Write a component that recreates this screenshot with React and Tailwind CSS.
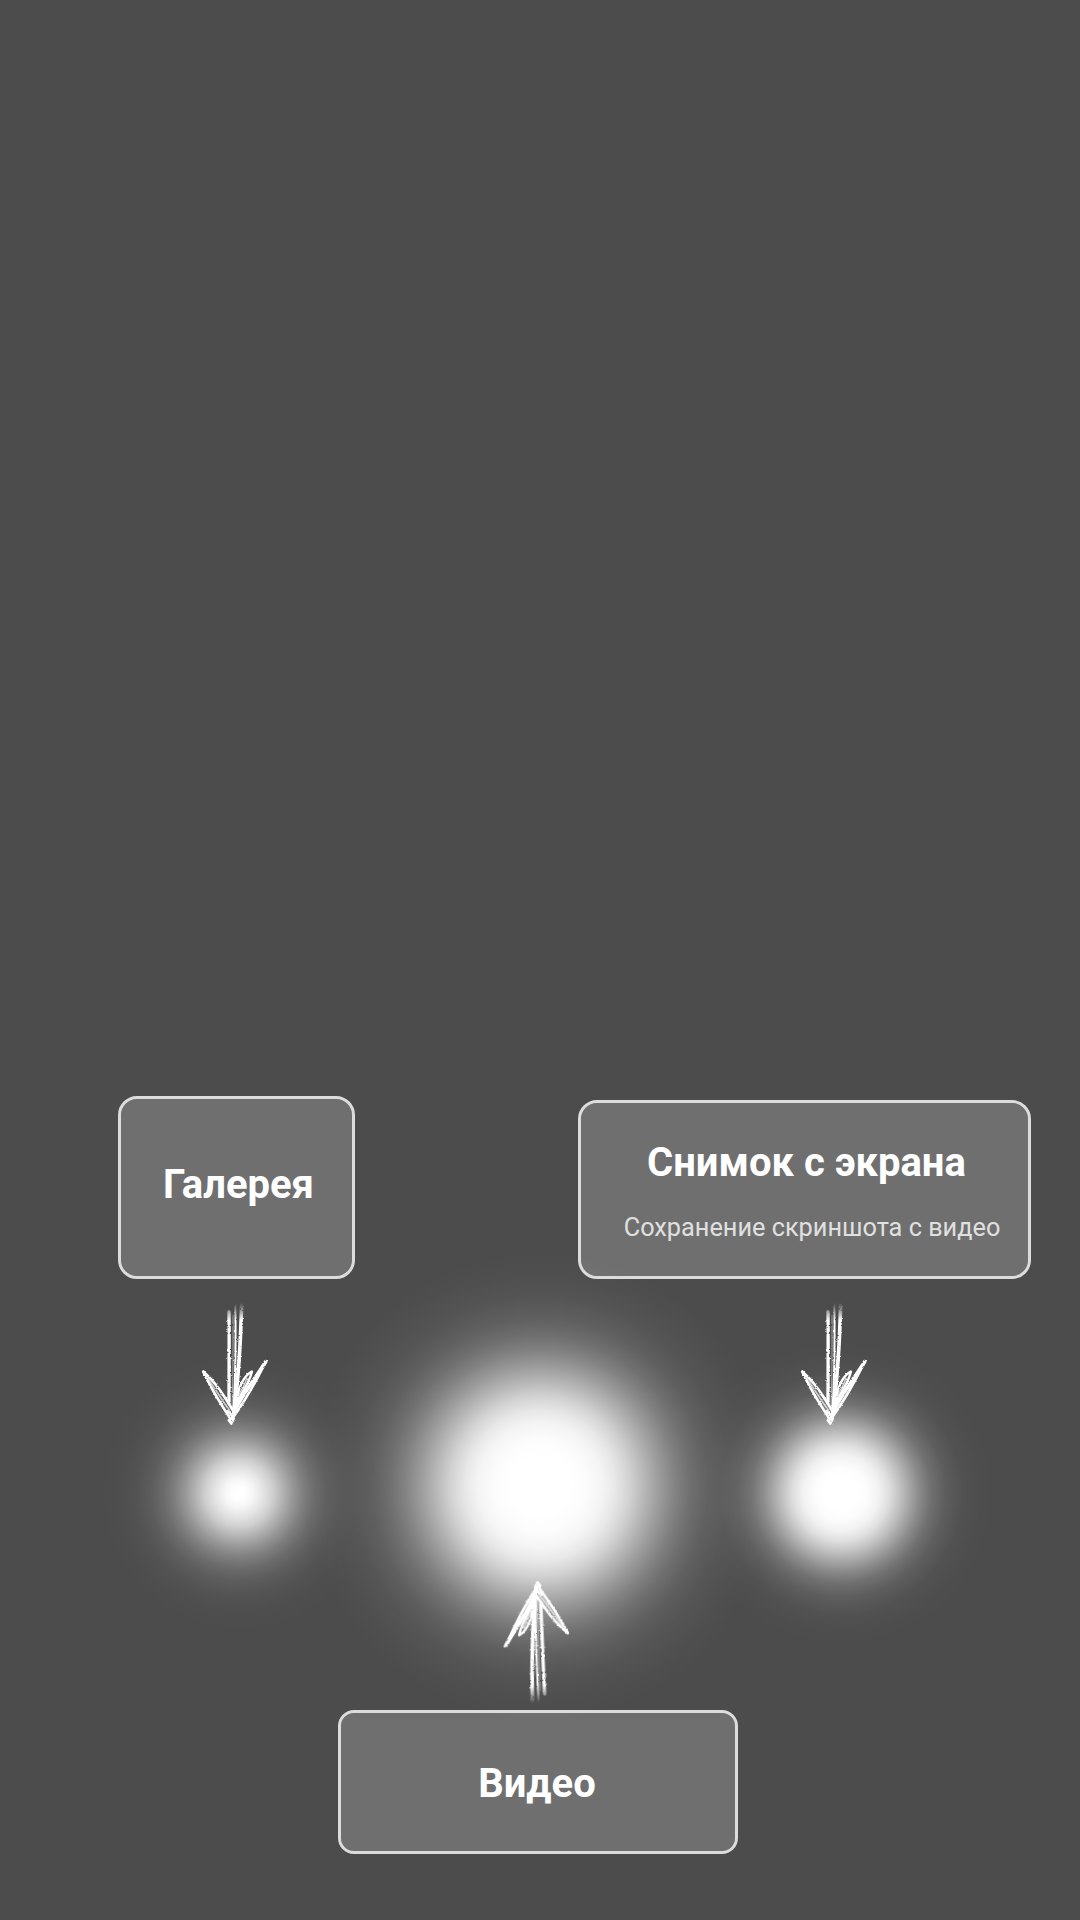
import React from "react";

const GLOWS = {
  small: [[0, 1], [6, 0.995], [14, 0.95], [24, 0.85], [34, 0.73], [44, 0.57], [54, 0.42], [64, 0.29], [75, 0.18], [88, 0.095], [103, 0.04], [120, 0.012], [140, 0]],
  medium: [[0, 1], [16, 1], [26, 0.985], [38, 0.925], [48, 0.82], [58, 0.67], [68, 0.51], [78, 0.355], [90, 0.205], [104, 0.1], [122, 0.03], [140, 0.008], [155, 0]],
  large: [[0, 1], [28, 1], [45, 0.985], [62, 0.94], [75, 0.87], [90, 0.745], [105, 0.59], [120, 0.44], [135, 0.305], [150, 0.2], [168, 0.11], [190, 0.048], [212, 0.018], [235, 0]],
};

function Glow({ size, className }) {
  const stops = GLOWS[size];
  const r = stops[stops.length - 1][0];
  return (
    <svg width={r * 2} height={r * 2} className={`absolute -z-10 max-w-none -translate-x-1/2 -translate-y-1/2 ${className}`} aria-hidden="true">
      <radialGradient id={`glow-${size}`}>
        {stops.map(([d, a]) => (
          <stop key={d} offset={d / r} stopColor="#fff" stopOpacity={a} />
        ))}
      </radialGradient>
      <circle cx={r} cy={r} r={r} fill={`url(#glow-${size})`} />
    </svg>
  );
}

// Chalk arrow: rough strokes, fading out at the tail
function Arrow({ id, up = false }) {
  return (
    <svg width="90" height="140" viewBox="0 0 270 420" className="block overflow-visible" aria-hidden="true">
      <defs>
        <linearGradient id={`fade-${id}`} gradientUnits="userSpaceOnUse" x1="0" y1="24" x2="0" y2="76">
          <stop offset="0" stopColor="#fff" stopOpacity="0" />
          <stop offset="1" stopColor="#fff" />
        </linearGradient>
        <mask id={`tail-${id}`} maskUnits="userSpaceOnUse" x="0" y="0" width="270" height="420">
          <rect width="270" height="420" fill={`url(#fade-${id})`} />
        </mask>
        <filter id={`chalk-${id}`} filterUnits="userSpaceOnUse" x="0" y="0" width="270" height="420">
          <feTurbulence type="fractalNoise" baseFrequency="0.16" numOctaves="2" seed="4" result="noise" />
          <feDisplacementMap in="SourceGraphic" in2="noise" scale="7" xChannelSelector="R" yChannelSelector="G" />
        </filter>
      </defs>
      <g transform={up ? "translate(-11 3) rotate(177.5 135 210)" : undefined}>
        <g mask={`url(#tail-${id})`}>
          <g filter={`url(#chalk-${id})`} fill="none" stroke="#fff" strokeLinecap="round" strokeLinejoin="round">
            <path d="M155 20C153 110 147 240 131 355" strokeWidth="11" />
            <path d="M136 22C137 120 139 220 130 350" strokeWidth="6" />
            <path d="M129 60C129 150 130 230 126 340" strokeWidth="3" opacity=".5" />
            <path d="M117 50C118 130 117 220 117 325" strokeWidth="10" />
            <path d="M40 230C60 275 88 320 122 372" strokeWidth="8" />
            <path d="M40 230C76 260 102 302 128 345" strokeWidth="8" />
            <path d="M54 250C75 282 95 313 118 346" strokeWidth="5" opacity=".7" />
            <path d="M227 200C190 260 155 300 133 350" strokeWidth="11" />
            <path d="M223 208C195 265 160 325 126 372" strokeWidth="8" />
            <path d="M184 230C158 246 145 275 138 325" strokeWidth="7" />
            <path d="M186 230C176 268 157 290 140 322" strokeWidth="7" />
            <path d="M171 250C164 270 156 285 145 302" strokeWidth="4" opacity=".8" />
            <path d="M112 348L128 362L116 376L124 386L132 370" strokeWidth="7" />
          </g>
        </g>
      </g>
    </svg>
  );
}

function Card({ className, title, children }) {
  return (
    <div className={`border-[3px] border-[#dcdcdc] bg-white/20 bg-clip-padding text-center whitespace-nowrap ${className}`}>
      <h2 className="text-[40px] leading-[48px] font-bold text-white">{title}</h2>
      {children}
    </div>
  );
}

export default function App() {
  return (
    <main className="isolate flex h-[1920px] w-[1080px] flex-col overflow-hidden bg-[#4c4c4c] pt-[1096px] font-['Roboto',sans-serif]">
      <div className="flex h-[183px] items-end gap-[223px] pl-[118px]">
        <Card className="h-[183px] w-[237px] rounded-[19px] pt-[62px] pl-[4px]" title="Галерея" />
        <Card className="h-[179px] w-[453px] rounded-[19px] pt-[36px] pl-[4px]" title="Снимок с экрана">
          <p className="mt-[26px] pl-[11px] text-[25.3px] leading-[30px] text-[#e0e0e0]">Сохранение скриншота с видео</p>
        </Card>
      </div>
      <div className="flex h-[431px] pl-[190px]">
        <div className="relative w-[90px] pt-4">
          <Glow size="small" className="top-[214px] left-[49px]" />
          <Arrow id="gallery" />
        </div>
        <div className="relative ml-[215px] flex w-[90px] flex-col justify-end">
          <Glow size="large" className="top-[207px] left-[45px]" />
          <Arrow id="video" up />
        </div>
        <div className="relative ml-[204px] w-[90px] pt-4">
          <Glow size="medium" className="top-[214px] left-[52px]" />
          <Arrow id="screenshot" />
        </div>
      </div>
      <Card className="ml-[338px] h-[144px] w-[400px] rounded-[16px] pt-[47px] pr-[2px]" title="Видео" />
    </main>
  );
}
